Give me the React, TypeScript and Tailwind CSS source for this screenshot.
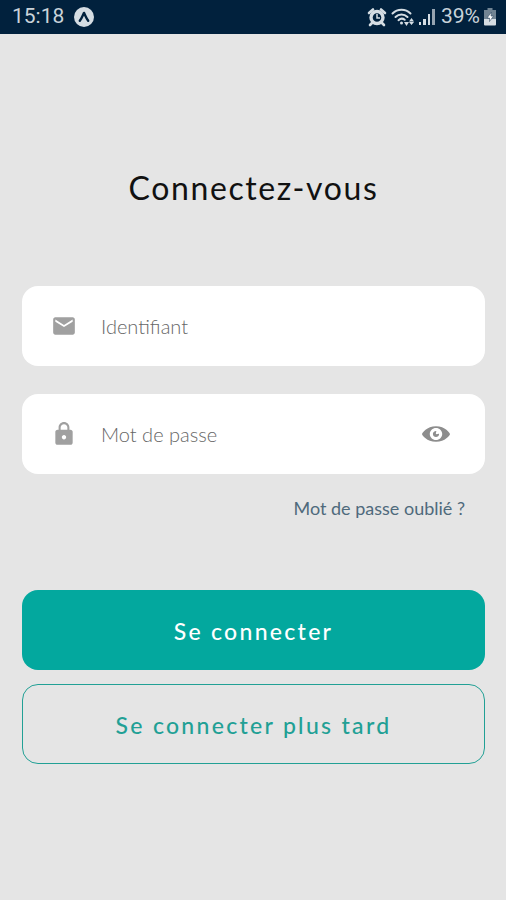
import { ReactNode, useState } from 'react';
import { MdEmail, MdLock } from 'react-icons/md';

const EyeIcon = () => (
  <svg viewBox="0 0 20 20" className="size-7" fill="currentColor" aria-hidden="true">
    <path d="M10 4.4C3.439 4.4 0 9.232 0 10c0 .766 3.439 5.6 10 5.6 6.56 0 10-4.834 10-5.6 0-.768-3.44-5.6-10-5.6zm0 9.907c-2.455 0-4.445-1.928-4.445-4.307S7.545 5.691 10 5.691s4.444 1.93 4.444 4.309-1.989 4.307-4.444 4.307zM10 10c-.407-.447.663-2.154 0-2.154-1.228 0-2.223.965-2.223 2.154s.995 2.154 2.223 2.154c1.227 0 2.223-.965 2.223-2.154 0-.547-1.877.379-2.223 0z" />
  </svg>
);

const AppBadge = () => (
  <svg viewBox="0 0 20 20" className="size-5" aria-hidden="true">
    <circle cx="10" cy="10" r="10" fill="#d5dde3" />
    <path
      d="M5.800 13.800C7.600 11.500 8.600 8.500 10 5.900c1.400 2.600 2.400 5.600 4.200 7.900"
      fill="none"
      stroke="#01213d"
      strokeWidth="2.4"
      strokeLinecap="round"
      strokeLinejoin="round"
    />
  </svg>
);

const AlarmIcon = () => (
  <svg viewBox="0 0 20 20" className="size-5" fill="none" aria-hidden="true">
    <path
      d="M2 6l4-3.500M18 6l-4-3.500M5 16l-2 2M15 16l2 2"
      stroke="#d5dde3"
      strokeWidth="2.6"
      strokeLinecap="round"
    />
    <circle cx="10" cy="10.5" r="6" stroke="#d5dde3" strokeWidth="3.4" />
    <path d="M10 7v4h3" stroke="#d5dde3" strokeWidth="1.5" />
  </svg>
);

const WifiIcon = () => (
  <svg viewBox="0 0 24 20" className="h-5 w-6" fill="none" aria-hidden="true">
    <path
      d="M1.500 6.500c5-5 13-5 18 0M4.500 10c3.500-3.400 8.500-3.400 12 0M7.500 13.200c2-1.800 4.500-1.800 6.200-.4"
      stroke="#d5dde3"
      strokeWidth="2"
      strokeLinecap="round"
    />
    <circle cx="10.5" cy="16" r="1.5" fill="#d5dde3" />
    <path d="M15.500 19 13 15h5zM20.500 11l2.500 3.500h-5zM20.500 18l2.500-3h-5z" fill="#d5dde3" />
  </svg>
);

const SignalIcon = () => (
  <svg viewBox="0 0 16 18" className="h-[18px] w-4" fill="#d5dde3" aria-hidden="true">
    <path d="M0 14h2v3H0zM4 11h3v6H4zM9 6h2v11H9z" />
    <path d="M13 1h3v16h-3z" opacity=".7" />
  </svg>
);

const BatteryIcon = () => (
  <svg viewBox="0 0 12 18" className="h-[18px] w-3" aria-hidden="true">
    <path d="M3.500 0h5v2H12v9H0V2h3.500z" fill="#718493" />
    <path d="M0 11h12v5.500a1 1 0 0 1-1 1H1a1 1 0 0 1-1-1z" fill="#d5dde3" />
    <path d="M7.500 4 3 10h2.500v3.500L9.500 8H7z" fill="#fff" stroke="#35506a" strokeWidth=".6" />
  </svg>
);

const StatusBar = () => (
  <header className="flex h-[34px] items-center justify-between bg-[#01213d] pr-2.5 pl-3 font-[Roboto,sans-serif] text-[21px] text-[#c9d3da]">
    <div className="flex items-center gap-2.5">
      <span>15:18</span>
      <AppBadge />
    </div>
    <div className="flex items-center gap-1">
      <AlarmIcon />
      <WifiIcon />
      <SignalIcon />
      <span className="pl-0.5">39%</span>
      <BatteryIcon />
    </div>
  </header>
);

interface FieldProps {
  label: string;
  type: string;
  icon: ReactNode;
  children?: ReactNode;
}

const Field = ({ label, type, icon, children }: FieldProps) => (
  <div className="flex h-20 items-center rounded-2xl bg-white pr-[35px] pl-[29px] text-[#a0a0a0]">
    {icon}
    <input
      type={type}
      aria-label={label}
      placeholder={label}
      className="ml-6 min-w-0 flex-1 text-xl font-light text-gray-800 outline-none placeholder:text-[#666]"
    />
    {children}
  </div>
);

const App = () => {
  const [visible, setVisible] = useState(false);

  return (
    <div className="min-h-screen bg-[#e5e5e5] font-[Lato,sans-serif]">
      <StatusBar />
      <main className="pt-[134px] pr-[21px] pb-8 pl-[22px]">
        <h1 className="text-center text-[32px] leading-10 tracking-wider text-[#111]">
          Connectez-vous
        </h1>
        <form className="mt-[78px]" onSubmit={(event) => event.preventDefault()}>
          <div className="space-y-7">
            <Field label="Identifiant" type="text" icon={<MdEmail size={26} />} />
            <Field
              label="Mot de passe"
              type={visible ? 'text' : 'password'}
              icon={<MdLock size={26} />}>
              <button
                type="button"
                aria-label="Afficher le mot de passe"
                className="text-[#8d8d8d]"
                onClick={() => setVisible(!visible)}>
                <EyeIcon />
              </button>
            </Field>
          </div>
          <div className="mt-5 flex justify-end pr-5">
            <a href="#" className="text-lg leading-7 text-[#4f6a7c]">
              Mot de passe oublié ?
            </a>
          </div>
          <div className="mt-[68px] space-y-3.5">
            <button
              type="submit"
              className="h-20 w-full rounded-2xl bg-[#03a89e] pt-0.5 text-[23px] font-medium tracking-widest text-white">
              Se connecter
            </button>
            <button
              type="button"
              className="h-20 w-full rounded-2xl border border-[#21a095] pt-0.5 text-[23px] font-medium tracking-widest text-[#21a095]">
              Se connecter plus tard
            </button>
          </div>
        </form>
      </main>
    </div>
  );
};

export default App;
